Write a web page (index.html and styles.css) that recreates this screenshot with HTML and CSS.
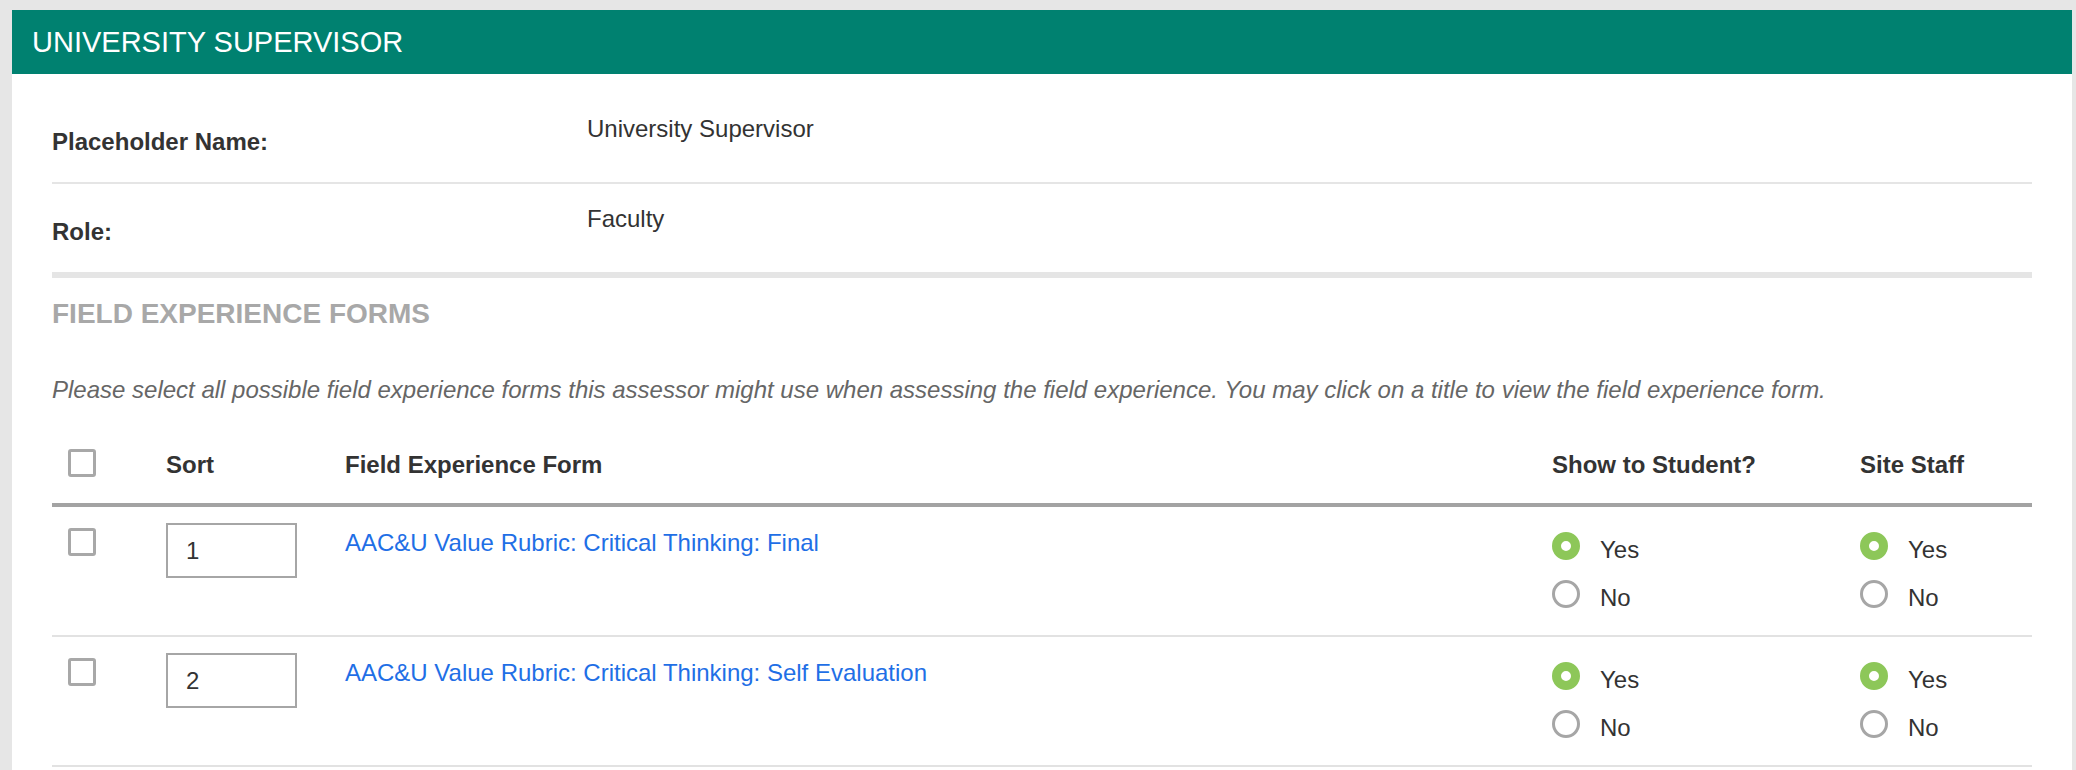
FILE: index.html
```html
<!DOCTYPE html>
<html>
<head>
    <title>University Supervisor</title>
    <link rel="stylesheet" href="styles.css">
</head>
<body>
    <div class="panel">
        <div class="panel-heading">UNIVERSITY SUPERVISOR</div>

        <div class="panel-body">
            <!-- Placeholder info -->
            <div class="info-row">
                <div class="info-label">Placeholder Name:</div>
                <div class="info-value">University Supervisor</div>
            </div>
            <div class="info-row last">
                <div class="info-label">Role:</div>
                <div class="info-value">Faculty</div>
            </div>

            <h2 class="section-title">FIELD EXPERIENCE FORMS</h2>
            <p class="hint">Please select all possible field experience forms this assessor might use when assessing the field experience. You may click on a title to view the field experience form.</p>

            <table class="forms">
                <colgroup>
                    <col class="c-check">
                    <col class="c-sort">
                    <col class="c-form">
                    <col class="c-show">
                    <col class="c-staff">
                </colgroup>
                <thead>
                    <tr>
                        <th class="check-cell"><span class="checkbox"></span></th>
                        <th>Sort</th>
                        <th>Field Experience Form</th>
                        <th>Show to Student?</th>
                        <th>Site Staff</th>
                    </tr>
                </thead>
                <tbody>
                    <tr>
                        <td class="check-cell"><span class="checkbox"></span></td>
                        <td class="sort-cell"><input class="sort-input" type="text" value="1"></td>
                        <td class="form-cell"><a href="#">AAC&amp;U Value Rubric: Critical Thinking: Final</a></td>
                        <td class="radio-cell">
                            <div class="option"><span class="radio checked"></span><span class="opt-text">Yes</span></div>
                            <div class="option"><span class="radio"></span><span class="opt-text">No</span></div>
                        </td>
                        <td class="radio-cell">
                            <div class="option"><span class="radio checked"></span><span class="opt-text">Yes</span></div>
                            <div class="option"><span class="radio"></span><span class="opt-text">No</span></div>
                        </td>
                    </tr>
                    <tr>
                        <td class="check-cell"><span class="checkbox"></span></td>
                        <td class="sort-cell"><input class="sort-input" type="text" value="2"></td>
                        <td class="form-cell"><a href="#">AAC&amp;U Value Rubric: Critical Thinking: Self Evaluation</a></td>
                        <td class="radio-cell">
                            <div class="option"><span class="radio checked"></span><span class="opt-text">Yes</span></div>
                            <div class="option"><span class="radio"></span><span class="opt-text">No</span></div>
                        </td>
                        <td class="radio-cell">
                            <div class="option"><span class="radio checked"></span><span class="opt-text">Yes</span></div>
                            <div class="option"><span class="radio"></span><span class="opt-text">No</span></div>
                        </td>
                    </tr>
                </tbody>
            </table>
        </div>
    </div>
</body>
</html>
```

FILE: styles.css
```css
html, body { margin: 0; background: #e6e6e6; }
body {
    font-family: "Liberation Sans", Arial, sans-serif;
    font-size: 24px;
    line-height: 28px;
    color: #333;
    padding: 10px 4px 0 12px;
}
.panel { background: #fff; min-height: 760px; }
.panel-heading {
    background: #008170;
    color: #fff;
    height: 64px;
    display: flex;
    align-items: center;
    padding-left: 20px;
    font-size: 29px;
}
.panel-body { padding: 20px 40px 0; }

/* info rows */
.info-row {
    display: flex;
    align-items: flex-start;
    height: 88px;
    border-bottom: 2px solid #e5e5e5;
}
.info-row.last { border-bottom: 6px solid #e5e5e5; }
.info-label { width: 535px; font-weight: bold; margin-top: 34px; }
.info-value { margin-top: 21px; }

.section-title {
    margin: 20px 0 0;
    font-size: 28px;
    line-height: 32px;
    color: #a8a8a8;
}
.hint {
    margin: 46px 0 0;
    font-size: 24px;
    line-height: 28px;
    font-style: italic;
    color: #666;
}

/* table */
table.forms {
    width: 100%;
    table-layout: fixed;
    border-collapse: collapse;
    margin-top: 45px;
}
.c-check { width: 114px; }
.c-sort { width: 179px; }
.c-form { width: auto; }
.c-show { width: 308px; }
.c-staff { width: 172px; }
th {
    text-align: left;
    vertical-align: bottom;
    padding: 0 0 24px;
    border-bottom: 4px solid #a3a3a3;
}
td {
    vertical-align: top;
    padding: 0;
    border-bottom: 2px solid #e2e2e2;
}
.check-cell { padding-left: 16px; }
th.check-cell .checkbox { margin-bottom: 2px; }
td.check-cell { padding-top: 21px; }
.sort-cell { padding-top: 16px; }
.form-cell { padding-top: 22px; }
.radio-cell { padding: 25px 0 7px; }

.checkbox {
    display: block;
    width: 28px;
    height: 28px;
    box-sizing: border-box;
    border: 3px solid #a8a8a8;
    border-radius: 3px;
    background: #fff;
}
.sort-input {
    display: block;
    width: 131px;
    height: 55px;
    box-sizing: border-box;
    border: 2px solid #a6a6a6;
    padding: 0 0 0 18px;
    font-family: inherit;
    font-size: 24px;
    color: #333;
    outline: none;
}
.form-cell a { color: #1f6fe6; text-decoration: none; }

.option { display: flex; align-items: flex-start; height: 48px; }
.radio {
    width: 28px;
    height: 28px;
    box-sizing: border-box;
    border: 3px solid #a6a6a6;
    border-radius: 50%;
    background: #fff;
}
.radio.checked { border: 9px solid #8dc759; }
.opt-text { margin: 4px 0 0 20px; color: #333; }
```
